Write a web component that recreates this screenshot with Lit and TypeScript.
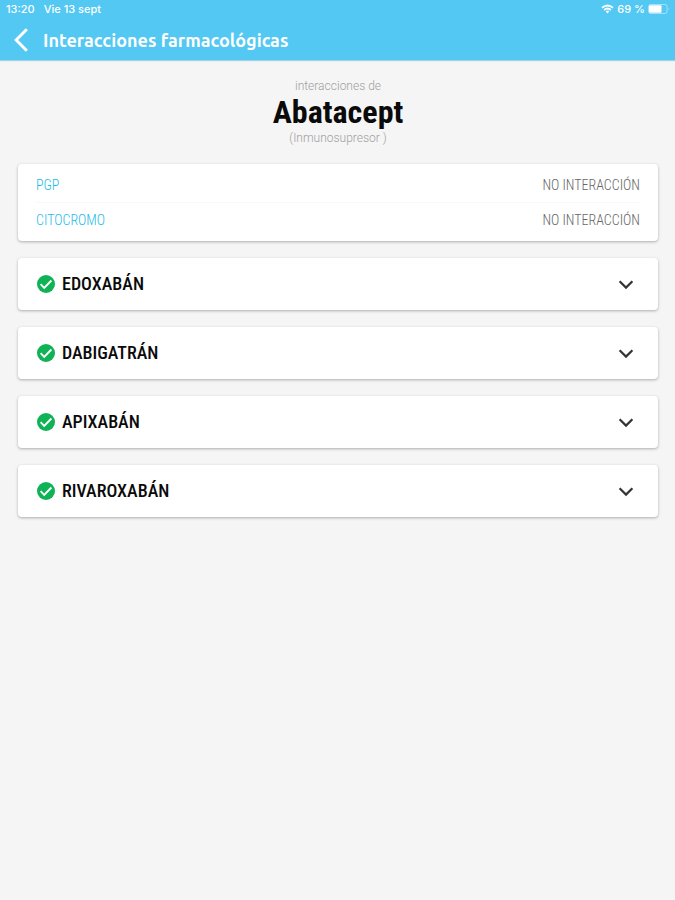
import { LitElement, html, css } from "lit";
import { customElement, property, state } from "lit/decorators.js";

@customElement("drug-panel")
class DrugPanel extends LitElement {
  @property() name = "";
  @state() private open = false;

  static styles = css`
    :host {
      display: block;
      background: #fff;
      border-radius: 4px;
      box-shadow: 0 1px 3px rgba(0, 0, 0, 0.3);
    }
    .head {
      display: flex;
      align-items: center;
      gap: 6px;
      width: 100%;
      height: 52px;
      padding: 0 23px 0 18px;
      border: 0;
      background: none;
      color: #0a0a0a;
      font: 500 18px/24px "Roboto Condensed", "Liberation Sans Narrow", Roboto, sans-serif;
      text-align: left;
      cursor: pointer;
    }
    .name {
      flex: 1;
    }
    .icon {
      display: block;
      flex: none;
    }
    .body {
      margin: 0;
      padding: 0 18px 16px;
      color: #777;
      font: 14px/20px Roboto, sans-serif;
    }
  `;

  render() {
    return html`
      <button class="head" aria-expanded=${this.open} @click=${() => (this.open = !this.open)}>
        <svg class="icon" width="20" height="20" viewBox="0 0 20 20" aria-hidden="true">
          <circle cx="10" cy="10" r="9" fill="#0fb254" />
          <path d="M4.6 10.2l3.6 3.6 7.2-7.3" fill="none" stroke="#fff" stroke-width="1.9" />
        </svg>
        <span class="name">${this.name}</span>
        <svg class="icon" width="18" height="18" viewBox="0 0 18 18" aria-hidden="true">
          <path d="M2.6 6.3L9 12.6l6.4-6.3" fill="none" stroke="#333" stroke-width="2.2" />
        </svg>
      </button>
      ${this.open ? html`<p class="body">No interacción</p>` : null}
    `;
  }
}

@customElement("app-root")
class AppRoot extends LitElement {
  static styles = css`
    :host {
      display: block;
      min-height: 100vh;
      background: #f5f5f5;
      font-family: Roboto, sans-serif;
    }
    .top {
      background: #52c8f3;
      color: #fff;
      box-shadow: 0 1px 1px rgba(40, 160, 205, 0.4);
    }
    .status {
      display: flex;
      align-items: center;
      height: 18px;
      padding: 0 5px 2px 6px;
      font: 500 11px/18px Inter, sans-serif;
    }
    .bar {
      display: flex;
      align-items: center;
      gap: 12px;
      height: 40px;
      padding: 0 13px;
    }
    .date {
      flex: 1;
      margin-left: 9px;
    }
    .wifi {
      margin-right: 3px;
    }
    .battery {
      margin-left: 3px;
    }
    .back {
      display: flex;
      padding: 0;
      border: 0;
      background: none;
      cursor: pointer;
    }
    .title {
      margin: 0;
      font: 700 18px/24px Ubuntu, "Noto Sans", sans-serif;
    }
    .content {
      display: flex;
      flex-direction: column;
      gap: 17px;
      padding: 17px 17px 24px 18px;
    }
    .intro {
      text-align: center;
      color: #a0a0a0;
      font-weight: 300;
      font-size: 12px;
      line-height: 18px;
    }
    .intro p {
      margin: 0;
    }
    .drug {
      margin: 0;
      color: #0a0a0a;
      font: 700 32px/34px "Roboto Condensed", "Liberation Sans Narrow", Roboto, sans-serif;
    }
    .facts {
      margin: 0;
      padding: 4px 18px;
      background: #fff;
      border-radius: 4px;
      box-shadow: 0 1px 3px rgba(0, 0, 0, 0.3);
      font: 300 14px/34px "Roboto Condensed", "Liberation Sans Narrow", Roboto, sans-serif;
    }
    .fact {
      display: flex;
      justify-content: space-between;
    }
    .fact + .fact {
      border-top: 1px solid #f8f8f8;
    }
    dt {
      color: #1cbce8;
    }
    dd {
      margin: 0;
      color: #666;
    }
  `;

  private facts = [
    ["PGP", "NO INTERACCIÓN"],
    ["CITOCROMO", "NO INTERACCIÓN"],
  ];
  private drugs = ["EDOXABÁN", "DABIGATRÁN", "APIXABÁN", "RIVAROXABÁN"];

  render() {
    return html`
      <header class="top">
        <div class="status">
          <span>13:20</span>
          <span class="date">Vie 13 sept</span>
          <svg class="wifi" width="13" height="10" viewBox="0 0 13 10" aria-hidden="true">
            <path d="M1 3.8Q6.5-.8 12 3.8M3.1 6Q6.5 3.1 9.9 6" fill="none" stroke="#fff" stroke-width="1.8" />
            <path d="M4.6 7.3Q6.5 5.8 8.4 7.3L6.5 9.5z" fill="#fff" />
          </svg>
          <span>69 %</span>
          <svg class="battery" width="22" height="10" viewBox="0 0 22 10" aria-hidden="true">
            <rect x=".5" y=".5" width="18.5" height="9" rx="2" fill="none" stroke="#fff" stroke-opacity=".45" />
            <rect x="1" y="1.3" width="12.5" height="7.4" rx="1" fill="#fff" />
            <path d="M20.3 3.5q1.4 1.5 0 3z" fill="#fff" fill-opacity=".55" />
          </svg>
        </div>
        <div class="bar">
          <button class="back" aria-label="Volver">
            <svg width="18" height="26" viewBox="0 0 18 26" aria-hidden="true">
              <path d="M13.8 2.3L3.2 13l10.6 10.7" fill="none" stroke="#fff" stroke-width="3" />
            </svg>
          </button>
          <h1 class="title">Interacciones farmacológicas</h1>
        </div>
      </header>
      <main class="content">
        <section class="intro">
          <p>interacciones de</p>
          <h2 class="drug">Abatacept</h2>
          <p>(Inmunosupresor )</p>
        </section>
        <dl class="facts">
          ${this.facts.map(([k, v]) => html`<div class="fact"><dt>${k}</dt><dd>${v}</dd></div>`)}
        </dl>
        ${this.drugs.map((d) => html`<drug-panel .name=${d}></drug-panel>`)}
      </main>
    `;
  }
}
